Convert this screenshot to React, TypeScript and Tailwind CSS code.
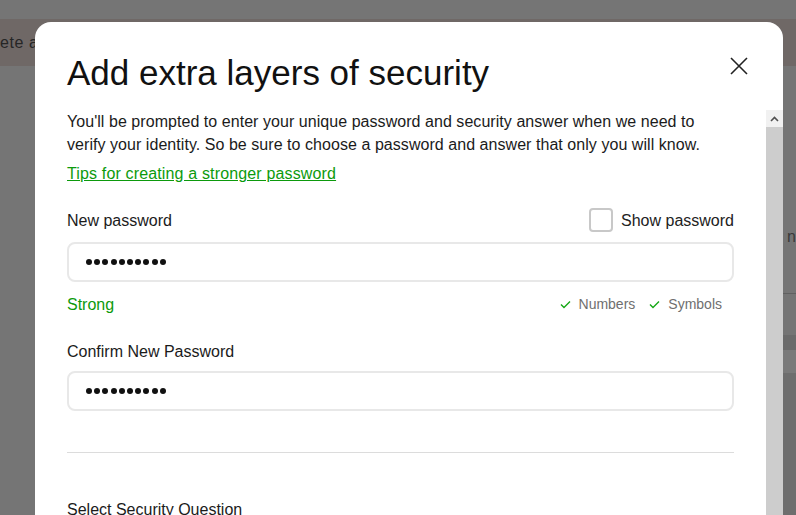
import { useState } from "react";

const Check = () => (
  <svg width="11" height="9" viewBox="0 0 11 9" className="mr-[8px]">
    <path d="M1 4.5 L4 7.5 L10 1.5" fill="none" stroke="#16a816" strokeWidth="1.4" />
  </svg>
);

function PasswordInput({ shown, value }: { shown: boolean; value: string }) {
  return (
    <div className="flex h-[40px] w-full items-center rounded-[8px] border-2 border-[#e8e8e8] bg-white px-[17px]">
      {shown ? (
        <span className="text-[16px] text-[#111]">{value}</span>
      ) : (
        <div className="flex gap-[2.2px]">
          {Array.from({ length: value.length }).map((_, i) => (
            <span key={i} className="h-[6px] w-[6px] rounded-full bg-[#111]" />
          ))}
        </div>
      )}
    </div>
  );
}

export default function App() {
  const [showPassword, setShowPassword] = useState(false);
  const password = "Secure#202";

  return (
    <div className="relative h-[515px] w-[796px] overflow-hidden bg-[#757575] font-['Liberation_Sans',Arial,sans-serif]">
      {/* page behind the overlay */}
      <div className="h-[19px]" />
      <div className="flex h-[47px] items-center bg-[#6f6866]">
        <span className="text-[16px] tracking-[0.6px] text-[#262626]">ete ad</span>
      </div>
      <div className="ml-auto flex w-[13px] flex-col">
        <div className="h-[161px]" />
        <div className="flex h-[20px] items-center pl-[4px]">
          <span className="text-[16px] text-[#3a3a3a]">n</span>
        </div>
        <div className="h-[46px]" />
        <div className="h-px bg-[#606060]" />
        <div className="h-[41px]" />
        <div className="h-[15px] bg-[#6b6b6b]" />
        <div className="h-[23px] bg-[#7a7a7a]" />
        <div className="h-[150px] bg-[#6e6e6e]" />
      </div>

      {/* modal */}
      <div className="absolute left-[35px] top-[22px] flex h-[520px] w-[748px] flex-col rounded-t-[16px] bg-white text-[#1b1b1b]">
        <header className="flex h-[86px] items-start justify-between pl-[32px] pr-[35px]">
          <h1 className="mt-[31px] text-[35px] leading-[40px] text-[#111]">Add extra layers of security</h1>
          <button className="mt-[35px] flex h-[18px] w-[18px] items-center justify-center">
            <svg width="18" height="18" viewBox="0 0 18 18">
              <path d="M1 1 L17 17 M17 1 L1 17" stroke="#222" strokeWidth="1.6" />
            </svg>
          </button>
        </header>

        <div className="flex flex-1 overflow-hidden">
          <div className="flex-1 px-[32px]">
            <p className="mt-[2px] text-[16px] leading-[23px] tracking-[0.05px]">
              You'll be prompted to enter your unique password and security answer when we need to verify your
              identity. So be sure to choose a password and answer that only you will know.
            </p>
            <a
              href="#"
              className="mt-[6px] block w-fit text-[16px] leading-[23px] tracking-[0.15px] text-[#0c9a0c] underline"
            >
              Tips for creating a stronger password
            </a>

            <div className="mt-[23px] flex h-[24px] items-center justify-between">
              <span className="pt-[2px] text-[16px]">New password</span>
              <label className="flex items-center gap-[8px]">
                <button
                  onClick={() => setShowPassword(!showPassword)}
                  className="h-[24px] w-[24px] rounded-[4px] border-2 border-[#c8c8c8] bg-white"
                />
                <span className="pt-[2px] text-[16px] text-[#222]">Show password</span>
              </label>
            </div>
            <div className="mt-[10px]">
              <PasswordInput shown={showPassword} value={password} />
            </div>

            <div className="mt-[10px] flex h-[24px] items-center justify-between">
              <span className="pt-[2px] text-[16px] text-[#0c9a0c]">Strong</span>
              <div className="flex items-center pr-[12px] text-[14px] text-[#6f6f6f]">
                <Check />
                <span>Numbers</span>
                <span className="ml-[14px]" />
                <Check />
                <span>Symbols</span>
              </div>
            </div>

            <div className="mt-[24px] text-[16px] leading-[24px]">Confirm New Password</div>
            <div className="mt-[7px]">
              <PasswordInput shown={showPassword} value={password} />
            </div>

            <div className="mt-[41px] h-px bg-[#dcdcdc]" />

            <div className="mt-[45px] text-[16px] leading-[24px]">Select Security Question</div>
          </div>

          {/* scrollbar */}
          <div className="mt-[2px] flex w-[17px] flex-col">
            <div className="flex h-[17px] items-center justify-center bg-[#f1f1f1]">
              <svg width="9" height="6" viewBox="0 0 9 6">
                <path d="M1 5 L4.5 1.5 L8 5" fill="none" stroke="#505050" strokeWidth="1.6" />
              </svg>
            </div>
            <div className="flex-1 bg-[#cdcdcd]" />
          </div>
        </div>
      </div>
    </div>
  );
}
